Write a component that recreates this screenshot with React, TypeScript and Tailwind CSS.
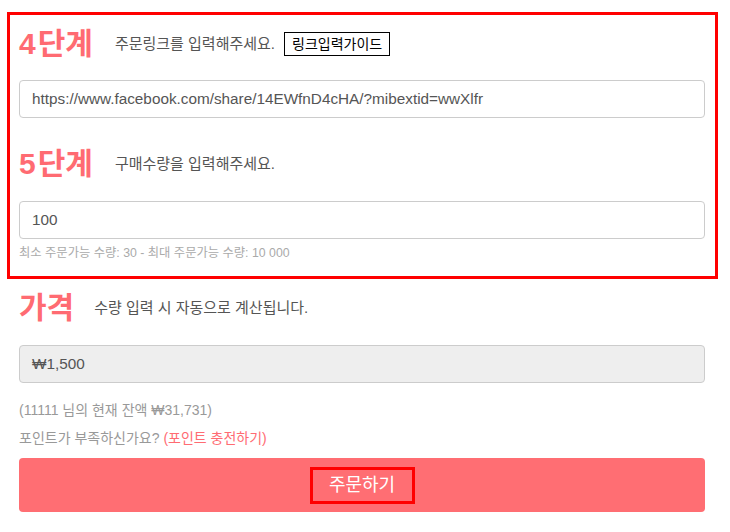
import React from "react";

const font = { fontFamily: '"Liberation Sans", "Noto Sans CJK KR", sans-serif' };

export default function App() {
  return (
    <div className="w-[730px] h-[532px] bg-white pl-[19px] pr-[25px] pt-[12px]" style={font}>
      <section className="-ml-[12px] -mr-[13px] pl-[9px] pr-[10px] pt-[10px] pb-[14px] border-[3px] border-[#ff0000]">
        <div className="flex items-center h-[38px]">
          <h2 className="text-[30px] font-bold leading-[38px] text-[#ff6b72]">
            <span className="pr-[2px]">4</span>단계
          </h2>
          <span className="ml-[22px] text-[15px] text-[#555]">주문링크를 입력해주세요.</span>
          <button className="ml-[9px] h-[24px] px-[7px] border border-black text-[14px] leading-[22px] text-black bg-white">
            링크입력가이드
          </button>
        </div>
        <div className="mt-[17px] h-[38px] border border-[#ccc] rounded-[4px] flex items-center px-[12px] text-[15.3px] text-[#555]">
          https://www.facebook.com/share/14EWfnD4cHA/?mibextid=wwXlfr
        </div>
        <div className="mt-[27px] flex items-center h-[38px]">
          <h2 className="text-[30px] font-bold leading-[38px] text-[#ff6b72]">
            <span className="pr-[2px]">5</span>단계
          </h2>
          <span className="ml-[22px] text-[15px] text-[#555]">구매수량을 입력해주세요.</span>
        </div>
        <div className="mt-[18px] h-[38px] border border-[#ccc] rounded-[4px] flex items-center px-[12px] text-[15.3px] text-[#555]">
          100
        </div>
        <p className="mt-[5px] text-[12.3px] leading-[18px] text-[#aaa]">
          최소 주문가능 수량: 30 - 최대 주문가능 수량: 10 000
        </p>
      </section>
      <div className="mt-[10px] flex items-center h-[38px]">
        <h2 className="text-[30px] font-bold leading-[38px] text-[#ff6b72]">가격</h2>
        <span className="ml-[20px] text-[15px] text-[#555]">수량 입력 시 자동으로 계산됩니다.</span>
      </div>
      <div className="mt-[18px] h-[38px] bg-[#eee] border border-[#ccc] rounded-[4px] flex items-center px-[12px] text-[15.3px] text-[#555]">
        ₩1,500
      </div>
      <p className="mt-[17px] text-[14px] leading-[20px] text-[#999]">(11111 님의 현재 잔액 ₩31,731)</p>
      <p className="mt-[8px] text-[14px] leading-[20px] text-[#999]">
        포인트가 부족하신가요? <span className="text-[#ff6b72]">(포인트 충전하기)</span>
      </p>
      <button className="mt-[10px] w-full h-[54px] bg-[#ff6e73] rounded-[4px] flex items-center justify-center">
        <span className="h-[37px] w-[105px] border-[3px] border-[#ff0000] flex items-center justify-center text-[18px] text-white">
          주문하기
        </span>
      </button>
    </div>
  );
}
